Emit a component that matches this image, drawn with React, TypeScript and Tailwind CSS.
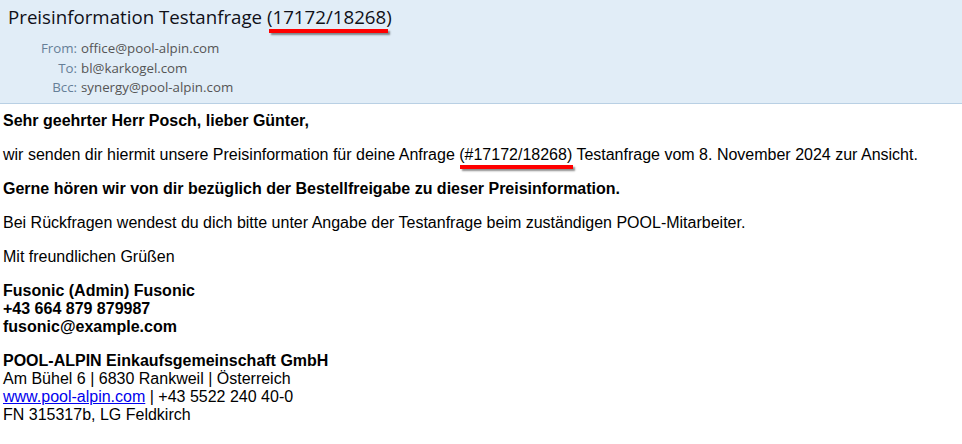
import React from "react";

function Mark({ children, className }: { children: React.ReactNode; className: string }) {
  return (
    <span className="relative">
      {children}
      <span className={className} />
    </span>
  );
}

export default function App() {
  const body = { fontFamily: '"Liberation Sans", Arial, sans-serif' };
  return (
    <div className="w-[962px] h-[444px] bg-white overflow-hidden">
      <div
        className="bg-[#e1edf7] border-b border-[#b9d0e4] h-[104px]"
        style={{ fontFamily: '"Open Sans", "Noto Sans", sans-serif' }}
      >
        <div className="pl-[8px] pt-[4px] text-[18.7px] leading-[26px] text-[#101018]">
          Preisinformation Testanfrage{" "}
          <Mark className="absolute left-[2px] right-[4px] top-[25px] h-[4px] bg-[#ff0000] shadow-[2px_2px_2px_rgba(0,0,0,0.45)]">
            (17172/18268)
          </Mark>
        </div>
        <div className="mt-[9px] grid grid-cols-[77px_1fr] gap-x-[4px] text-[13.3px] leading-[19.5px]">
          <div className="text-right text-[#667f98]">From:</div>
          <div className="text-[#555]">office@pool-alpin.com</div>
          <div className="text-right text-[#667f98]">To:</div>
          <div className="text-[#555]">bl@karkogel.com</div>
          <div className="text-right text-[#667f98]">Bcc:</div>
          <div className="text-[#555]">synergy@pool-alpin.com</div>
        </div>
      </div>
      <div className="pl-[3px] pt-[8px] text-[16px] leading-[18px] text-black" style={body}>
        <p className="font-bold mb-[16px]">Sehr geehrter Herr Posch, lieber Günter,</p>
        <p className="mb-[16px]">
          wir senden dir hiermit unsere Preisinformation für deine Anfrage{" "}
          <Mark className="absolute left-[1px] right-[-1px] top-[19px] h-[4px] bg-[#ff0000] shadow-[2px_2px_2px_rgba(0,0,0,0.45)]">
            (#17172/18268)
          </Mark>{" "}
          Testanfrage vom 8. November 2024 zur Ansicht.
        </p>
        <p className="font-bold mb-[16px]">Gerne hören wir von dir bezüglich der Bestellfreigabe zu dieser Preisinformation.</p>
        <p className="mb-[16px]">Bei Rückfragen wendest du dich bitte unter Angabe der Testanfrage beim zuständigen POOL-Mitarbeiter.</p>
        <p className="mb-[16px]">Mit freundlichen Grüßen</p>
        <p className="font-bold mb-[16px]">
          Fusonic (Admin) Fusonic
          <br />
          +43 664 879 879987
          <br />
          fusonic@example.com
        </p>
        <p>
          <span className="font-bold">POOL-ALPIN Einkaufsgemeinschaft GmbH</span>
          <br />
          Am Bühel 6 | 6830 Rankweil | Österreich
          <br />
          <a href="#" className="text-[#0000ee] underline">www.pool-alpin.com</a> | +43 5522 240 40-0
          <br />
          FN 315317b, LG Feldkirch
        </p>
      </div>
    </div>
  );
}
